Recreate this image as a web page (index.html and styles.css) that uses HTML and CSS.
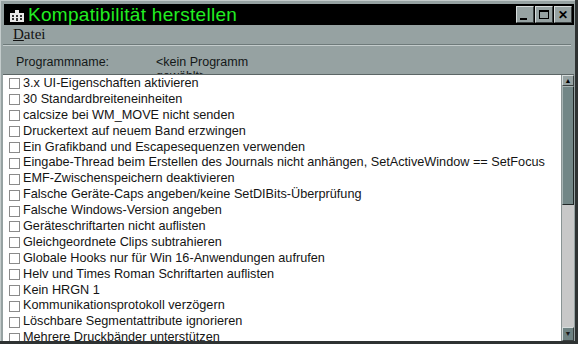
FILE: index.html
```html
<!DOCTYPE html>
<html lang="de">
<head>
    <meta charset="UTF-8">
    <title>Kompatibilität herstellen</title>
    <link rel="stylesheet" href="styles.css">
</head>
<body>
<div class="window">
    <div class="titlebar">
        <svg class="appicon" width="14" height="12" viewBox="0 0 14 12">
            <rect x="0" y="3" width="14" height="9" fill="#e8e8e8"/>
            <rect x="5" y="0" width="4" height="3" fill="#e8e8e8"/>
            <rect x="2" y="5" width="2" height="2" fill="#333"/>
            <rect x="6" y="5" width="2" height="2" fill="#333"/>
            <rect x="10" y="5" width="2" height="2" fill="#333"/>
            <rect x="2" y="8" width="2" height="2" fill="#333"/>
            <rect x="6" y="8" width="2" height="3" fill="#333"/>
            <rect x="10" y="8" width="2" height="2" fill="#333"/>
        </svg>
        <span class="title">Kompatibilität herstellen</span>
        <div class="btns">
            <div class="btn"><span class="min"></span></div>
            <div class="btn"><span class="max"></span></div>
            <div class="btn close">✕</div>
        </div>
    </div>
    <div class="menu"><span><u>D</u>atei</span></div>
    <div class="groove"></div>
    <div class="prog">
        <span class="label">Programmname:</span>
        <span class="value">&lt;kein Programm gewählt&gt;</span>
    </div>
    <div class="listbox">
        <ul class="items">
            <li><i></i>3.x UI-Eigenschaften aktivieren</li>
            <li><i></i>30 Standardbreiteneinheiten</li>
            <li><i></i>calcsize bei WM_MOVE nicht senden</li>
            <li><i></i>Druckertext auf neuem Band erzwingen</li>
            <li><i></i>Ein Grafikband und Escapesequenzen verwenden</li>
            <li><i></i>Eingabe-Thread beim Erstellen des Journals nicht anhängen, SetActiveWindow == SetFocus</li>
            <li><i></i>EMF-Zwischenspeichern deaktivieren</li>
            <li><i></i>Falsche Geräte-Caps angeben/keine SetDIBits-Überprüfung</li>
            <li><i></i>Falsche Windows-Version angeben</li>
            <li><i></i>Geräteschriftarten nicht auflisten</li>
            <li><i></i>Gleichgeordnete Clips subtrahieren</li>
            <li><i></i>Globale Hooks nur für Win 16-Anwendungen aufrufen</li>
            <li><i></i>Helv und Times Roman Schriftarten auflisten</li>
            <li><i></i>Kein HRGN 1</li>
            <li><i></i>Kommunikationsprotokoll verzögern</li>
            <li><i></i>Löschbare Segmentattribute ignorieren</li>
            <li><i></i>Mehrere Druckbänder unterstützen</li>
        </ul>
        <div class="scroll">
            <div class="arrow up">▲</div>
            <div class="thumb"></div>
            <div class="track"></div>
            <div class="arrow down">▼</div>
        </div>
    </div>
</div>
</body>
</html>
```
FILE: styles.css
```css
*{
    margin: 0;
    padding: 0;
    box-sizing: border-box;
}
body{
    background-color: #2e3232;
    width: 578px;
    height: 344px;
    overflow: hidden;
    font-family: "Liberation Sans", Arial, sans-serif;
}
.window{
    width: 575px;
    height: 341px;
    background-color: #96a2a2;
    border-top: 1px solid #c4cccc;
    border-left: 1px solid #c4cccc;
    padding: 3px 1px 0 2px;
    display: flex;
    flex-direction: column;
}
.titlebar{
    height: 21px;
    margin-left: 1px;
    background-color: #000;
    display: flex;
    align-items: center;
    padding-left: 6px;
}
.appicon{
    margin-right: 4px;
    margin-top: 2px;
}
.title{
    color: #22ee22;
    font-size: 19px;
    letter-spacing: 0.3px;
    line-height: 21px;
    flex: 1;
}
.btns{
    display: flex;
    gap: 1px;
    padding-right: 2px;
}
.btn{
    width: 18px;
    height: 17px;
    background-color: #96a2a2;
    border: 1px solid;
    border-color: #d6dcdc #3a4040 #3a4040 #d6dcdc;
    display: flex;
    align-items: center;
    justify-content: center;
}
.btn .min{
    width: 7px;
    height: 2px;
    background-color: #000;
    margin-top: 9px;
    margin-left: -4px;
}
.btn .max{
    width: 10px;
    height: 9px;
    border: 1px solid #000;
    border-top-width: 2px;
}
.btn.close{
    font-size: 12px;
    font-weight: bold;
    color: #000;
}
.menu{
    height: 17px;
    padding: 1px 0 0 10px;
    font-family: "Liberation Serif", "Times New Roman", serif;
    font-size: 15px;
    line-height: 17px;
    color: #111;
}
.groove{
    height: 2px;
    margin: 2px 3px 0 0;
    border-top: 1px solid #6e7a7a;
    border-bottom: 1px solid #c4cccc;
}
.prog{
    height: 28px;
    display: flex;
    padding: 9px 0 0 13px;
    font-size: 12.5px;
    line-height: 14px;
    color: #141818;
    overflow: hidden;
}
.label{
    width: 140px;
}
.value{
    width: 100px;
}
.listbox{
    flex: 1;
    display: flex;
    overflow: hidden;
    border-top: 1px solid #5c6666;
}
.items{
    flex: 1;
    list-style: none;
    background-color: #fff;
    overflow: hidden;
    padding-top: 1px;
}
.items li{
    height: 15.9px;
    line-height: 15.9px;
    font-size: 12.7px;
    color: #141414;
    white-space: nowrap;
    overflow: hidden;
    display: flex;
    align-items: center;
    padding-left: 6px;
}
.items li i{
    width: 11px;
    height: 11px;
    border: 1px solid #8a8a8a;
    background-color: #fff;
    margin-right: 3px;
    flex: none;
}
.scroll{
    width: 13px;
    display: flex;
    flex-direction: column;
    background-color: #c8c8c8;
    border-left: 1px solid #8a9494;
}
.arrow{
    height: 12px;
    font-size: 7px;
    line-height: 10px;
    text-align: center;
    background-color: #96a2a2;
    border: 1px solid;
    border-color: #d6dcdc #3a4040 #3a4040 #d6dcdc;
    color: #000;
}
.arrow.up{
    height: 11px;
}
.arrow.down{
    height: 14px;
    background-color: #6e8282;
    line-height: 12px;
    color: #1a1a1a;
}
.thumb{
    height: 119px;
    background-color: #728686;
    border: 1px solid;
    border-color: #a8b4b4 #202626 #202626 #a8b4b4;
}
.track{
    flex: 1;
}
```
